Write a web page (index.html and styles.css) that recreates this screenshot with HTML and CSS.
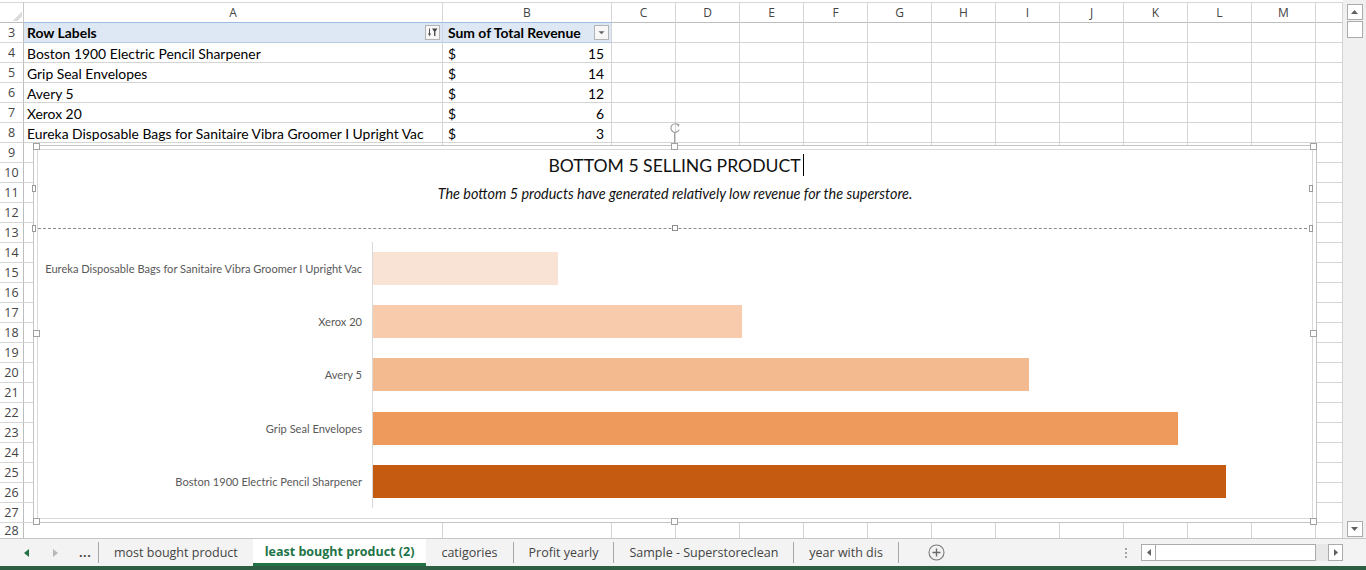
FILE: index.html
```html
<!DOCTYPE html>
<html>
<head>
<meta charset="utf-8">
<title>least bought product (2)</title>
<link rel="stylesheet" href="styles.css">
</head>
<body>
<div class="app">
  <div class="workspace">
    <div class="sheet">
      <div class="grid">
        <div class="corner"></div>
        <div class="ch">A</div><div class="ch">B</div><div class="ch">C</div><div class="ch">D</div><div class="ch">E</div><div class="ch">F</div><div class="ch">G</div><div class="ch">H</div><div class="ch">I</div><div class="ch">J</div><div class="ch">K</div><div class="ch">L</div><div class="ch">M</div><div class="ch"></div>

        <div class="rh">3</div>
        <div class="c pv pv-a"><span>Row Labels</span>
          <svg class="btn-ico" width="15" height="15" viewBox="0 0 15 15"><rect x="0.5" y="0.5" width="14" height="14" fill="#f7f7f7" stroke="#b3b3b3"/><path d="M4.5 3.5V10.5" stroke="#555" stroke-width="1"/><path d="M2.8 8.6L4.5 11L6.2 8.6Z" fill="#555"/><path d="M7 3.5H12.5L10.4 6.6V11H9.1V6.6Z" fill="#444"/></svg>
        </div>
        <div class="c pv pv-b"><span>Sum of Total Revenue</span>
          <svg class="btn-ico" width="15" height="15" viewBox="0 0 15 15"><rect x="0.5" y="0.5" width="14" height="14" fill="#f7f7f7" stroke="#b3b3b3"/><path d="M4.5 6.2H10.5L7.5 9.2Z" fill="#666"/></svg>
        </div>
        <div class="c"></div><div class="c"></div><div class="c"></div><div class="c"></div><div class="c"></div><div class="c"></div><div class="c"></div><div class="c"></div><div class="c"></div><div class="c"></div><div class="c"></div><div class="c"></div>

        <div class="rh">4</div><div class="c txt">Boston 1900 Electric Pencil Sharpener</div><div class="c money"><span>$</span><span>15</span></div>
        <div class="c"></div><div class="c"></div><div class="c"></div><div class="c"></div><div class="c"></div><div class="c"></div><div class="c"></div><div class="c"></div><div class="c"></div><div class="c"></div><div class="c"></div><div class="c"></div>

        <div class="rh">5</div><div class="c txt">Grip Seal Envelopes</div><div class="c money"><span>$</span><span>14</span></div>
        <div class="c"></div><div class="c"></div><div class="c"></div><div class="c"></div><div class="c"></div><div class="c"></div><div class="c"></div><div class="c"></div><div class="c"></div><div class="c"></div><div class="c"></div><div class="c"></div>

        <div class="rh">6</div><div class="c txt">Avery 5</div><div class="c money"><span>$</span><span>12</span></div>
        <div class="c"></div><div class="c"></div><div class="c"></div><div class="c"></div><div class="c"></div><div class="c"></div><div class="c"></div><div class="c"></div><div class="c"></div><div class="c"></div><div class="c"></div><div class="c"></div>

        <div class="rh">7</div><div class="c txt">Xerox 20</div><div class="c money"><span>$</span><span>6</span></div>
        <div class="c"></div><div class="c"></div><div class="c"></div><div class="c"></div><div class="c"></div><div class="c"></div><div class="c"></div><div class="c"></div><div class="c"></div><div class="c"></div><div class="c"></div><div class="c"></div>

        <div class="rh">8</div><div class="c txt">Eureka Disposable Bags for Sanitaire Vibra Groomer I Upright Vac</div><div class="c money"><span>$</span><span>3</span></div>
        <div class="c"></div><div class="c"></div><div class="c"></div><div class="c"></div><div class="c"></div><div class="c"></div><div class="c"></div><div class="c"></div><div class="c"></div><div class="c"></div><div class="c"></div><div class="c"></div>

        <div class="rh">9</div><div class="c"></div><div class="c"></div><div class="c"></div><div class="c"></div><div class="c"></div><div class="c"></div><div class="c"></div><div class="c"></div><div class="c"></div><div class="c"></div><div class="c"></div><div class="c"></div><div class="c"></div><div class="c"></div>
        <div class="rh">10</div><div class="c"></div><div class="c"></div><div class="c"></div><div class="c"></div><div class="c"></div><div class="c"></div><div class="c"></div><div class="c"></div><div class="c"></div><div class="c"></div><div class="c"></div><div class="c"></div><div class="c"></div><div class="c"></div>
        <div class="rh">11</div><div class="c"></div><div class="c"></div><div class="c"></div><div class="c"></div><div class="c"></div><div class="c"></div><div class="c"></div><div class="c"></div><div class="c"></div><div class="c"></div><div class="c"></div><div class="c"></div><div class="c"></div><div class="c"></div>
        <div class="rh">12</div><div class="c"></div><div class="c"></div><div class="c"></div><div class="c"></div><div class="c"></div><div class="c"></div><div class="c"></div><div class="c"></div><div class="c"></div><div class="c"></div><div class="c"></div><div class="c"></div><div class="c"></div><div class="c"></div>
        <div class="rh">13</div><div class="c"></div><div class="c"></div><div class="c"></div><div class="c"></div><div class="c"></div><div class="c"></div><div class="c"></div><div class="c"></div><div class="c"></div><div class="c"></div><div class="c"></div><div class="c"></div><div class="c"></div><div class="c"></div>
        <div class="rh">14</div><div class="c"></div><div class="c"></div><div class="c"></div><div class="c"></div><div class="c"></div><div class="c"></div><div class="c"></div><div class="c"></div><div class="c"></div><div class="c"></div><div class="c"></div><div class="c"></div><div class="c"></div><div class="c"></div>
        <div class="rh">15</div><div class="c"></div><div class="c"></div><div class="c"></div><div class="c"></div><div class="c"></div><div class="c"></div><div class="c"></div><div class="c"></div><div class="c"></div><div class="c"></div><div class="c"></div><div class="c"></div><div class="c"></div><div class="c"></div>
        <div class="rh">16</div><div class="c"></div><div class="c"></div><div class="c"></div><div class="c"></div><div class="c"></div><div class="c"></div><div class="c"></div><div class="c"></div><div class="c"></div><div class="c"></div><div class="c"></div><div class="c"></div><div class="c"></div><div class="c"></div>
        <div class="rh">17</div><div class="c"></div><div class="c"></div><div class="c"></div><div class="c"></div><div class="c"></div><div class="c"></div><div class="c"></div><div class="c"></div><div class="c"></div><div class="c"></div><div class="c"></div><div class="c"></div><div class="c"></div><div class="c"></div>
        <div class="rh">18</div><div class="c"></div><div class="c"></div><div class="c"></div><div class="c"></div><div class="c"></div><div class="c"></div><div class="c"></div><div class="c"></div><div class="c"></div><div class="c"></div><div class="c"></div><div class="c"></div><div class="c"></div><div class="c"></div>
        <div class="rh">19</div><div class="c"></div><div class="c"></div><div class="c"></div><div class="c"></div><div class="c"></div><div class="c"></div><div class="c"></div><div class="c"></div><div class="c"></div><div class="c"></div><div class="c"></div><div class="c"></div><div class="c"></div><div class="c"></div>
        <div class="rh">20</div><div class="c"></div><div class="c"></div><div class="c"></div><div class="c"></div><div class="c"></div><div class="c"></div><div class="c"></div><div class="c"></div><div class="c"></div><div class="c"></div><div class="c"></div><div class="c"></div><div class="c"></div><div class="c"></div>
        <div class="rh">21</div><div class="c"></div><div class="c"></div><div class="c"></div><div class="c"></div><div class="c"></div><div class="c"></div><div class="c"></div><div class="c"></div><div class="c"></div><div class="c"></div><div class="c"></div><div class="c"></div><div class="c"></div><div class="c"></div>
        <div class="rh">22</div><div class="c"></div><div class="c"></div><div class="c"></div><div class="c"></div><div class="c"></div><div class="c"></div><div class="c"></div><div class="c"></div><div class="c"></div><div class="c"></div><div class="c"></div><div class="c"></div><div class="c"></div><div class="c"></div>
        <div class="rh">23</div><div class="c"></div><div class="c"></div><div class="c"></div><div class="c"></div><div class="c"></div><div class="c"></div><div class="c"></div><div class="c"></div><div class="c"></div><div class="c"></div><div class="c"></div><div class="c"></div><div class="c"></div><div class="c"></div>
        <div class="rh">24</div><div class="c"></div><div class="c"></div><div class="c"></div><div class="c"></div><div class="c"></div><div class="c"></div><div class="c"></div><div class="c"></div><div class="c"></div><div class="c"></div><div class="c"></div><div class="c"></div><div class="c"></div><div class="c"></div>
        <div class="rh">25</div><div class="c"></div><div class="c"></div><div class="c"></div><div class="c"></div><div class="c"></div><div class="c"></div><div class="c"></div><div class="c"></div><div class="c"></div><div class="c"></div><div class="c"></div><div class="c"></div><div class="c"></div><div class="c"></div>
        <div class="rh">26</div><div class="c"></div><div class="c"></div><div class="c"></div><div class="c"></div><div class="c"></div><div class="c"></div><div class="c"></div><div class="c"></div><div class="c"></div><div class="c"></div><div class="c"></div><div class="c"></div><div class="c"></div><div class="c"></div>
        <div class="rh">27</div><div class="c"></div><div class="c"></div><div class="c"></div><div class="c"></div><div class="c"></div><div class="c"></div><div class="c"></div><div class="c"></div><div class="c"></div><div class="c"></div><div class="c"></div><div class="c"></div><div class="c"></div><div class="c"></div>
        <div class="rh rh-last">28</div><div class="c"></div><div class="c"></div><div class="c"></div><div class="c"></div><div class="c"></div><div class="c"></div><div class="c"></div><div class="c"></div><div class="c"></div><div class="c"></div><div class="c"></div><div class="c"></div><div class="c"></div><div class="c"></div>
      </div>

      <svg class="rotate" width="12" height="22" viewBox="0 0 12 22">
        <path d="M9.6 3.4A4.3 4.3 0 1 0 10.2 7.6" fill="none" stroke="#a0a0a0" stroke-width="1.2"/>
        <path d="M7.6 1.6L10.6 2.2L9.4 5.2Z" fill="#a0a0a0"/>
        <path d="M5.5 10.5V21" stroke="#a0a0a0" stroke-width="1"/>
      </svg>

      <div class="chart-frame">
        <div class="chart">
          <div class="chart-head">
            <div class="chart-title">BOTTOM 5 SELLING PRODUCT<span class="caret"></span></div>
            <div class="chart-sub">The bottom 5 products have generated relatively low revenue for the superstore.</div>
          </div>
          <div class="plot">
            <div class="lbl">Eureka Disposable Bags for Sanitaire Vibra Groomer I Upright Vac</div>
            <div class="track"><div class="bar b1" style="width:185px"></div></div>
            <div class="lbl">Xerox 20</div>
            <div class="track"><div class="bar b2" style="width:369px"></div></div>
            <div class="lbl">Avery 5</div>
            <div class="track"><div class="bar b3" style="width:656px"></div></div>
            <div class="lbl">Grip Seal Envelopes</div>
            <div class="track"><div class="bar b4" style="width:805px"></div></div>
            <div class="lbl">Boston 1900 Electric Pencil Sharpener</div>
            <div class="track"><div class="bar b5" style="width:853px"></div></div>
          </div>
        </div>
        <span class="h h-tl"></span><span class="h h-tm"></span><span class="h h-tr"></span>
        <span class="h h-ml"></span><span class="h h-mr"></span>
        <span class="h h-bl"></span><span class="h h-bm"></span><span class="h h-br"></span>
        <span class="th th-l1"></span><span class="th th-l2"></span>
        <span class="th th-r1"></span><span class="th th-r2"></span>
        <span class="tm"></span>
      </div>
    </div>

    <div class="vscroll">
      <div class="sbtn"><svg width="7" height="4" viewBox="0 0 7 4"><path d="M0 4L3.5 0L7 4Z" fill="#606060"/></svg></div>
      <div class="vthumb"></div>
      <div class="vfill"></div>
      <div class="sbtn"><svg width="7" height="4" viewBox="0 0 7 4"><path d="M0 0L3.5 4L7 0Z" fill="#606060"/></svg></div>
    </div>
  </div>

  <div class="tabbar">
    <div class="tabnav">
      <svg class="nav-l" width="5" height="8" viewBox="0 0 5 8"><path d="M5 0V8L0 4Z" fill="#217346"/></svg>
      <svg class="nav-r" width="5" height="8" viewBox="0 0 5 8"><path d="M0 0V8L5 4Z" fill="#b8b8b8"/></svg>
      <span class="dots">...</span>
    </div>
    <div class="sep"></div>
    <div class="tab">most bought product</div>
    <div class="tab active">least bought product (2)</div>
    <div class="tab">catigories</div>
    <div class="sep"></div>
    <div class="tab">Profit yearly</div>
    <div class="sep"></div>
    <div class="tab">Sample - Superstoreclean</div>
    <div class="sep"></div>
    <div class="tab">year with dis</div>
    <div class="sep"></div>
    <div class="addsheet"><svg width="17" height="17" viewBox="0 0 17 17"><circle cx="8.5" cy="8.5" r="7.5" fill="none" stroke="#7a7a7a" stroke-width="1.1"/><path d="M8.5 4.5V12.5M4.5 8.5H12.5" stroke="#6a6a6a" stroke-width="1.4"/></svg></div>
    <div class="spacer"></div>
    <div class="vdots"><i></i><i></i><i></i></div>
    <div class="hscroll">
      <div class="hbtn"><svg width="4" height="7" viewBox="0 0 4 7"><path d="M4 0V7L0 3.5Z" fill="#606060"/></svg></div>
      <div class="hthumb"></div>
      <div class="hfill"></div>
      <div class="hbtn"><svg width="4" height="7" viewBox="0 0 4 7"><path d="M0 0V7L4 3.5Z" fill="#606060"/></svg></div>
    </div>
  </div>
  <div class="statusbar"></div>
</div>
</body>
</html>
```

FILE: styles.css
```css
* { box-sizing: border-box; }
html, body { margin: 0; padding: 0; background: #fff; }
body { font-family: "Lato", "Liberation Sans", sans-serif; color: #000; overflow: hidden; }

.app { width: 1366px; height: 570px; display: flex; flex-direction: column; }

.workspace { display: flex; height: 538px; }

.sheet { position: relative; width: 1343px; height: 538px; overflow: hidden; padding-top: 2px; }

.grid {
  display: grid;
  grid-template-columns: 24px 419px 169px repeat(11, 64px) 27px;
  grid-template-rows: 21px;
  grid-auto-rows: 20px;
}

.corner {
  border-top: 1px solid #d6d6d6;
  border-right: 1px solid #c8c8c8;
  border-bottom: 1px solid #bdbdbd;
  background: linear-gradient(135deg, transparent 62%, #dcdcdc 62%, #dcdcdc 80%, transparent 80%) no-repeat;
  background-size: 12px 12px;
  background-position: 10px 6px;
}
.ch {
  border-top: 1px solid #d6d6d6;
  border-right: 1px solid #d6d6d6;
  border-bottom: 1px solid #bdbdbd;
  font-family: "Open Sans", "Liberation Sans", sans-serif;
  font-size: 12px;
  color: #444;
  text-align: center;
  line-height: 19px;
}
.rh {
  border-right: 1px solid #bdbdbd;
  border-bottom: 1px solid #d6d6d6;
  font-family: "Open Sans", "Liberation Sans", sans-serif;
  font-size: 12.5px;
  color: #444;
  text-align: center;
  line-height: 19px;
}
.rh-last { line-height: 15px; }
.c {
  border-right: 1px solid #d4d4d4;
  border-bottom: 1px solid #d4d4d4;
  font-size: 13.9px;
  line-height: 21px;
  white-space: nowrap;
  overflow: visible;
}
.txt { padding-left: 3px; }
.money { display: flex; justify-content: space-between; padding: 0 7px 0 5px; }

.pv {
  background: #dde8f4;
  border-top: 1px solid #9fbde0;
  margin-top: -1px;
  border-bottom: 1px solid #b4cbe6;
  font-weight: 700;
  display: flex;
  justify-content: space-between;
  align-items: center;
  padding: 0 2px 0 3px;
}
.pv-b { padding-left: 5px; }
.pv-a { border-right-color: #c9d8ea; }
.btn-ico { display: block; flex: none; }

/* rotation handle */
.rotate { position: absolute; left: 669px; top: 122px; }

/* chart */
.chart-frame {
  position: absolute;
  left: 33px; top: 145px;
  width: 1284px; height: 378px;
  border: 1px solid #c4c4c4;
  padding: 3px;
  background: #fff;
}
.chart {
  height: 100%;
  border: 1px solid #d9d9d9;
  display: flex;
  flex-direction: column;
}
.chart-head {
  height: 79px;
  border-bottom: 1px dashed #8c8c8c;
  text-align: center;
  padding-top: 4px;
}
.chart-title {
  font-size: 17.6px;
  line-height: 24px;
  color: #111;
  padding-left: 2px;
}
.caret { display: inline-block; width: 1px; height: 22px; background: #000; margin-left: 2px; vertical-align: -4px; }
.chart-sub {
  margin-top: 7px;
  font-size: 14.4px;
  line-height: 18px;
  font-style: italic;
  color: #111;
}
.plot {
  margin-top: 13px;
  height: 266px;
  display: grid;
  grid-template-columns: 335px 1fr;
  grid-template-rows: repeat(5, 1fr);
}
.lbl {
  border-right: 1px solid #d9d9d9;
  text-align: right;
  padding-right: 10px;
  font-size: 11.1px;
  color: #595959;
  display: flex;
  align-items: center;
  justify-content: flex-end;
  white-space: nowrap;
}
.track { display: flex; align-items: center; }
.bar { height: 33px; }
.b1 { background: #f9e3d5; }
.b2 { background: #f7cbab; }
.b3 { background: #f4ba8f; }
.b4 { background: #ef9a5d; }
.b5 { background: #c55a11; }

/* selection handles */
.h { position: absolute; width: 7px; height: 7px; background: #fff; border: 1px solid #a2a2a2; }
.h-tl { left: -1px; top: -3px; }
.h-tm { left: 637px; top: -3px; }
.h-tr { left: 1276px; top: -3px; }
.h-ml { left: -1px; top: 184px; }
.h-mr { left: 1276px; top: 184px; }
.h-bl { left: -1px; top: 372px; }
.h-bm { left: 637px; top: 372px; }
.h-br { left: 1276px; top: 372px; }
.th { position: absolute; width: 4px; height: 7px; background: #fff; border: 1px solid #9a9a9a; }
.th-l1 { left: -2px; top: 39px; }
.th-l2 { left: -2px; top: 79px; }
.th-r1 { left: 1275px; top: 39px; }
.th-r2 { left: 1275px; top: 79px; }
.tm { position: absolute; left: 638px; top: 79px; width: 6px; height: 6px; background: #fff; border: 1px solid #8c8c8c; }

/* vertical scrollbar */
.vscroll {
  width: 23px;
  height: 538px;
  background: #f0f0f0;
  display: flex;
  flex-direction: column;
  align-items: center;
  padding: 4px 0 1px;
}
.sbtn {
  width: 16px; height: 16px;
  background: #fff;
  border: 1px solid #ababab;
  display: flex; align-items: center; justify-content: center;
}
.vthumb { width: 16px; height: 17px; margin-top: 1px; background: #fff; border: 1px solid #ababab; }
.vfill { flex: 1; }

/* tab bar */
.tabbar {
  height: 28px;
  border-top: 1px solid #c6c6c6;
  background: #f3f3f3;
  display: flex;
  align-items: stretch;
  font-family: "Open Sans", "Liberation Sans", sans-serif;
  font-size: 12.5px;
  color: #444;
}
.tabnav { width: 98px; display: flex; align-items: center; padding-left: 24px; }
.nav-l { display: block; }
.nav-r { display: block; margin-left: 24px; }
.dots { margin-left: 21px; font-weight: 700; letter-spacing: 0.5px; color: #444; }
.sep { width: 1px; height: 21px; background: #a8a8a8; align-self: center; }
.tab { display: flex; align-items: center; padding: 0 15px 1px; white-space: nowrap; }
.tab.active {
  background: #fff;
  color: #217346;
  font-weight: 700;
  padding: 0 12px 0;
  border-bottom: 3px solid #217346;
}
.addsheet { display: flex; align-items: center; margin-left: 29px; }
.addsheet svg { display: block; }
.spacer { flex: 1; }
.vdots { display: flex; flex-direction: column; justify-content: center; gap: 2px; margin-right: 14px; }
.vdots i { display: block; width: 2px; height: 2px; background: #a6a6a6; }
.hscroll {
  width: 202px;
  margin: 5px 23px 5px 0;
  background: #e8e8e8;
  display: flex;
  align-items: stretch;
}
.hbtn {
  width: 15px;
  background: #fff;
  border: 1px solid #ababab;
  display: flex; align-items: center; justify-content: center;
}
.hthumb { width: 160px; background: #fff; border: 1px solid #ababab; border-left: none; }
.hfill { flex: 1; }
.statusbar { height: 4px; background: #2d5d42; }
```
